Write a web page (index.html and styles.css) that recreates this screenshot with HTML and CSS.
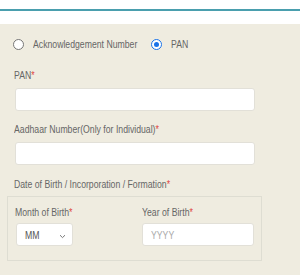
FILE: index.html
```html
<!DOCTYPE html>
<html>
<head>
<meta charset="utf-8">
<link rel="stylesheet" href="styles.css">
</head>
<body>
<div class="top"></div>
<div class="panel">
  <div class="radios">
    <label class="radio"><span class="dot"></span><span class="t ack">Acknowledgement Number</span></label>
    <label class="radio"><span class="dot on"></span><span class="t">PAN</span></label>
  </div>
  <div class="field">
    <div class="lbl"><span class="t">PAN<span class="req">*</span></span></div>
    <div class="input wide"></div>
  </div>
  <div class="field">
    <div class="lbl"><span class="t">Aadhaar Number(Only for Individual)<span class="req">*</span></span></div>
    <div class="input wide"></div>
  </div>
  <div class="lbl dob"><span class="t">Date of Birth / Incorporation / Formation<span class="req">*</span></span></div>
  <div class="box">
    <div class="col">
      <div class="lbl"><span class="t">Month of Birth<span class="req">*</span></span></div>
      <div class="input sel"><span class="t">MM</span>
        <svg class="chev" width="7" height="5" viewBox="0 0 7 5"><path d="M1 1.2 L3.5 3.6 L6 1.2" fill="none" stroke="#777" stroke-width="1"/></svg>
      </div>
    </div>
    <div class="col">
      <div class="lbl"><span class="t">Year of Birth<span class="req">*</span></span></div>
      <div class="input year"><span class="t ph">YYYY</span></div>
    </div>
  </div>
</div>
</body>
</html>
```
FILE: styles.css
```css
html, body { margin: 0; padding: 0; background: #fff; }
body {
  width: 300px; height: 275px; overflow: hidden;
  font-family: "Liberation Sans", Arial, sans-serif;
  font-size: 11px; color: #666;
}
.t {
  display: inline-block; white-space: nowrap;
  transform: scaleX(0.79); transform-origin: 0 50%;
}
.top {
  height: 9px;
  border-bottom: 2px solid #4a9fae;
  margin-bottom: 13px;
}
.panel {
  background: #efece0;
  height: 251px;
  padding: 0 0 0 14px;
  box-sizing: border-box;
}
.radios {
  display: flex; align-items: center;
  height: 40px;
}
.radio { display: flex; align-items: center; }
.ack { margin-right: -13px; }
.dot {
  width: 11px; height: 11px; border-radius: 50%;
  border: 1px solid #777; background: #fff;
  margin-right: 9px; margin-left: -1px; box-sizing: border-box; position: relative;
  flex: none;
}
.dot.on { border-color: #1a73e8; }
.dot.on::after {
  content: ""; position: absolute; left: 2px; top: 2px;
  width: 5px; height: 5px; border-radius: 50%; background: #1a73e8;
}
.lbl { line-height: 14px; }
.req { color: #e0443c; }
.field .lbl { padding-top: 4px; padding-bottom: 6px; }
.field:nth-child(3) .lbl { padding-top: 11px; }
.input {
  background: #fff; border: 1px solid #e2e0d8; border-radius: 3px;
  box-sizing: border-box; height: 23px;
}
.wide { width: 240px; margin-left: 1px; }
.dob { padding-top: 12px; padding-bottom: 5px; }
.box {
  margin-left: -7px; width: 255px; height: 65px; box-sizing: border-box;
  border: 1px solid #deddd2; display: flex; padding: 8px 0 0 7px;
}
.col .lbl { padding-bottom: 4px; }
.col:first-child { width: 127px; }
.sel {
  width: 57px; margin-left: 1px; display: flex; align-items: center;
  padding-left: 8px; position: relative; color: #555;
}
.chev { position: absolute; left: 42px; top: 10px; }
.year { width: 112px; display: flex; align-items: center; padding-left: 8px; }
.ph { color: #aaa; }
```
